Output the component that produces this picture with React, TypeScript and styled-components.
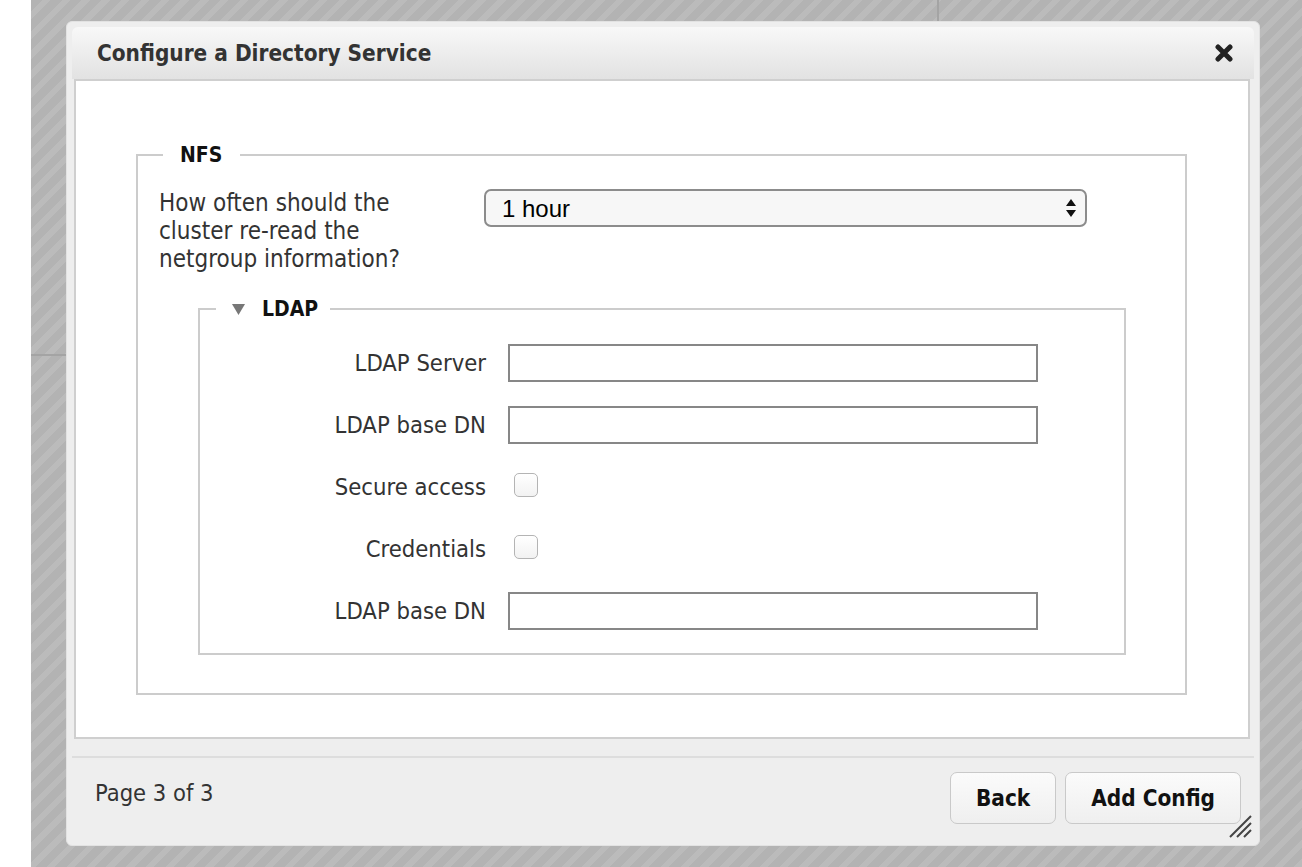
import styled, { createGlobalStyle } from "styled-components";

const GlobalStyle = createGlobalStyle`
  html, body {
    margin: 0;
    padding: 0;
  }
  body {
    font-family: "DejaVu Sans Condensed", "DejaVu Sans", Lato, sans-serif;
    font-stretch: condensed;
    background: #ffffff;
  }
`;

const Page = styled.div`
  display: flex;
  width: 1302px;
  height: 867px;
  overflow: hidden;
  background: #ffffff;
`;

const Backdrop = styled.div`
  position: relative;
  flex: 1;
  margin-left: 31px;
  padding: 21px 0 0 35px;
  background: repeating-linear-gradient(
    135deg,
    #b3b3b3 0 8px,
    #bbbbbb 8px 14px
  );

  &::before {
    content: "";
    position: absolute;
    left: 0;
    top: 354px;
    width: 35px;
    height: 2px;
    background: #a4a4a4;
  }
  &::after {
    content: "";
    position: absolute;
    left: 906px;
    top: 0;
    width: 2px;
    height: 21px;
    background: #a4a4a4;
  }
`;

const Dialog = styled.div`
  position: relative;
  box-sizing: border-box;
  width: 1194px;
  height: 825px;
  padding: 5px;
  display: flex;
  flex-direction: column;
  background: #eeeeee;
  border: 1px solid #e2e2e2;
  border-radius: 6px;
`;

const TitleBar = styled.div`
  display: flex;
  align-items: center;
  justify-content: space-between;
  height: 52px;
  padding: 0 20px 0 25px;
  border-radius: 6px 6px 0 0;
  background: linear-gradient(#f8f8f8, #e2e2e2);
`;

const Title = styled.h1`
  margin: 0;
  font-size: 22.4px;
  font-weight: 700;
  color: #333333;
`;

const CloseButton = styled.button`
  display: flex;
  padding: 0;
  border: none;
  background: none;
  cursor: pointer;
`;

const Content = styled.div`
  flex: 1;
  margin: 0 4px 0 2px;
  padding-top: 62px;
  background: #ffffff;
  border: 2px solid #cfcfcf;
`;

const Fieldset = styled.fieldset<{ $nested?: boolean }>`
  margin: ${(p) => (p.$nested ? "24px 0 0 39px" : "0 61px 0 60px")};
  padding: ${(p) => (p.$nested ? "23px 0 23px 0" : "0 59px 38px 21px")};
  border: 2px solid #cccccc;
  min-width: 0;
`;

const Legend = styled.legend<{ $nested?: boolean }>`
  display: flex;
  align-items: center;
  gap: 17px;
  margin-left: ${(p) => (p.$nested ? "16px" : "4px")};
  padding: ${(p) => (p.$nested ? "0 12px 0 16px" : "0 18px 0 17px")};
  font-size: 21px;
  line-height: 24px;
  font-weight: 700;
  color: #111111;
`;

const SettingRow = styled.div`
  display: grid;
  grid-template-columns: 325px 603px;
  align-items: start;
  margin-top: 22px;
`;

const LongLabel = styled.label`
  max-width: 262px;
  font-size: 24px;
  line-height: 28px;
  color: #333333;
`;

const SelectWrap = styled.div`
  position: relative;
`;

const Select = styled.select`
  display: block;
  box-sizing: border-box;
  width: 100%;
  height: 38px;
  padding: 0 40px 0 16px;
  appearance: none;
  border: 2px solid #8c8c8c;
  border-radius: 7px;
  background: #f7f7f7;
  font-family: "Liberation Sans", Arial, sans-serif;
  font-stretch: normal;
  font-size: 24px;
  color: #000000;
`;

const SelectArrows = styled.svg`
  position: absolute;
  right: 10px;
  top: 9px;
  pointer-events: none;
`;

const FormGrid = styled.div`
  display: grid;
  grid-template-columns: 286px 530px;
  grid-auto-rows: 38px;
  column-gap: 22px;
  row-gap: 24px;
  align-items: center;
`;

const FieldLabel = styled.label`
  text-align: right;
  font-size: 23.6px;
  color: #333333;
`;

const TextInput = styled.input`
  box-sizing: border-box;
  width: 100%;
  height: 38px;
  margin: 0;
  border: 2px solid #878787;
  background: #ffffff;
  font-family: inherit;
  font-size: 20px;
`;

const Checkbox = styled.input`
  appearance: none;
  width: 24px;
  height: 24px;
  margin: 0 0 0 6px;
  border: 1px solid #b4b4b4;
  border-radius: 5px;
  background: linear-gradient(#ffffff, #f2f2f2);
`;

const Footer = styled.div`
  display: flex;
  align-items: center;
  justify-content: space-between;
  margin-top: 17px;
  padding: 14px 13px 16px 23px;
  border-top: 2px solid #dddddd;
`;

const PageInfo = styled.span`
  margin-bottom: 10px;
  font-size: 23.5px;
  color: #333333;
`;

const ButtonGroup = styled.div`
  display: flex;
  gap: 9px;
`;

const Button = styled.button`
  height: 52px;
  padding: 0 25px;
  border: 1px solid #c9c9c9;
  border-radius: 7px;
  background: linear-gradient(#fbfbfb, #efefef);
  font-family: inherit;
  font-stretch: condensed;
  font-size: 22.4px;
  font-weight: 700;
  color: #111111;
  cursor: pointer;
`;

const ResizeGrip = styled.svg`
  position: absolute;
  right: 7px;
  bottom: 7px;
`;

const ldapFields = [
  { label: "LDAP Server", kind: "text" },
  { label: "LDAP base DN", kind: "text" },
  { label: "Secure access", kind: "check" },
  { label: "Credentials", kind: "check" },
  { label: "LDAP base DN", kind: "text" },
];

const App = () => {
  return (
    <>
      <GlobalStyle />
      <Page>
        <Backdrop>
          <Dialog>
            <TitleBar>
              <Title>Configure a Directory Service</Title>
              <CloseButton aria-label="close">
                <svg width="20" height="18" viewBox="0 0 20 18">
                  <path
                    d="M4 3 L16 15 M16 3 L4 15"
                    stroke="#222"
                    strokeWidth="5"
                    strokeLinecap="round"
                  />
                </svg>
              </CloseButton>
            </TitleBar>

            <Content>
              <Fieldset>
                <Legend>NFS</Legend>
                <SettingRow>
                  <LongLabel>
                    How often should the cluster re-read the netgroup
                    information?
                  </LongLabel>
                  <SelectWrap>
                    <Select defaultValue="1 hour">
                      <option>15 minutes</option>
                      <option>1 hour</option>
                      <option>1 day</option>
                    </Select>
                    <SelectArrows width="12" height="20" viewBox="0 0 12 20">
                      <path d="M6 1 L11 8 L1 8 Z M1 12 L11 12 L6 19 Z" fill="#111" />
                    </SelectArrows>
                  </SelectWrap>
                </SettingRow>

                <Fieldset $nested>
                  <Legend $nested>
                    <svg width="13" height="11" viewBox="0 0 13 11">
                      <path d="M0 0 L13 0 L6.5 11 Z" fill="#777" />
                    </svg>
                    LDAP
                  </Legend>
                  <FormGrid>
                    {ldapFields.map((f, i) => (
                      <>
                        <FieldLabel key={`l${i}`}>{f.label}</FieldLabel>
                        {f.kind === "text" ? (
                          <TextInput key={`i${i}`} type="text" />
                        ) : (
                          <div key={`c${i}`}>
                            <Checkbox type="checkbox" />
                          </div>
                        )}
                      </>
                    ))}
                  </FormGrid>
                </Fieldset>
              </Fieldset>
            </Content>

            <Footer>
              <PageInfo>Page 3 of 3</PageInfo>
              <ButtonGroup>
                <Button>Back</Button>
                <Button>Add Config</Button>
              </ButtonGroup>
            </Footer>

            <ResizeGrip width="24" height="24" viewBox="0 0 24 24">
              <path
                d="M23 2 L2 23 M23 9 L9 23 M23 16 L16 23"
                stroke="#444"
                strokeWidth="2"
              />
            </ResizeGrip>
          </Dialog>
        </Backdrop>
      </Page>
    </>
  );
};

export default App;
